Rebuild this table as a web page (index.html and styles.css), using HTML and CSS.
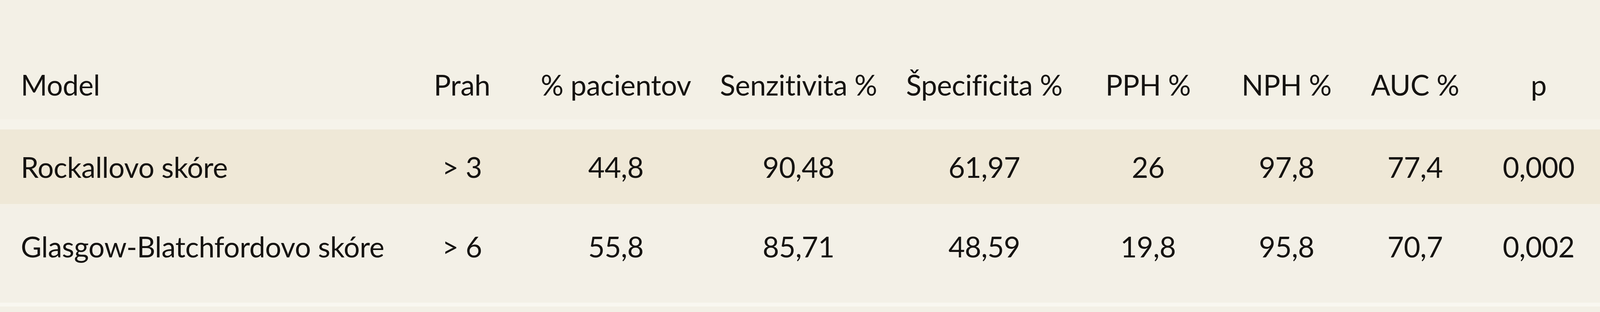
FILE: index.html
```html
<!DOCTYPE html>
<html lang="sk">
<head>
<meta charset="utf-8">
<title>Tabuľka</title>
<link rel="stylesheet" href="styles.css">
</head>
<body>
<table class="grid">
  <colgroup>
    <col class="c-model">
    <col class="c-prah">
    <col class="c-pac">
    <col class="c-senz">
    <col class="c-spec">
    <col class="c-pph">
    <col class="c-nph">
    <col class="c-auc">
    <col class="c-p">
  </colgroup>
  <thead>
    <tr class="head">
      <th class="name">Model</th>
      <th>Prah</th>
      <th>% pacientov</th>
      <th>Senzitivita %</th>
      <th>Špecificita %</th>
      <th>PPH %</th>
      <th>NPH %</th>
      <th>AUC %</th>
      <th class="last">p</th>
    </tr>
  </thead>
  <tbody>
    <tr class="row1">
      <td class="name">Rockallovo skóre</td>
      <td>&gt; 3</td>
      <td>44,8</td>
      <td>90,48</td>
      <td>61,97</td>
      <td>26</td>
      <td>97,8</td>
      <td>77,4</td>
      <td class="last">0,000</td>
    </tr>
    <tr class="row2">
      <td class="name">Glasgow-Blatchfordovo skóre</td>
      <td>&gt; 6</td>
      <td>55,8</td>
      <td>85,71</td>
      <td>48,59</td>
      <td>19,8</td>
      <td>95,8</td>
      <td>70,7</td>
      <td class="last">0,002</td>
    </tr>
  </tbody>
</table>
</body>
</html>
```

FILE: styles.css
```css
html, body {
  margin: 0;
  padding: 0;
  background: #f3f0e6;
}

body {
  width: 100vw;
  height: 100vh;
  overflow: hidden;
}

.grid {
  width: 100vw;
  table-layout: fixed;
  border-collapse: collapse;
  border-spacing: 0;
  font-family: "Lato", "Open Sans", sans-serif;
  font-size: 1.782vw;
  line-height: 18.875vh;
  color: #151311;
  border-bottom: 1.25vh solid #f9f7f0;
}

.c-model { width: 25.498vw; }
.c-prah { width: 6.76vw; }
.c-pac { width: 12.473vw; }
.c-senz { width: 10.352vw; }
.c-spec { width: 12.869vw; }
.c-pph { width: 7.608vw; }
.c-nph { width: 9.702vw; }
.c-auc { width: 6.364vw; }
.c-p { width: 8.372vw; }

.grid th,
.grid td {
  padding: 0;
  text-align: center;
  font-weight: 400;
  white-space: nowrap;
  letter-spacing: -0.01vw;
}

.grid .name {
  text-align: left;
  padding-left: 1.301vw;
}

.grid .last {
  padding-left: 0.707vw;
}

.head th {
  padding-top: 17.75vh;
  padding-bottom: 1.625vh;
  background: #f3f0e6;
  border-bottom: 3.25vh solid #f6f3ea;
}

.row1 td {
  padding-top: 2.625vh;
  padding-bottom: 2.375vh;
  background: #efe8d7;
  border-bottom: 1.25vh solid #f4f0e6;
}

.row2 td {
  padding-top: 3vh;
  padding-bottom: 8.5vh;
  background: #f3f0e7;
}
```
